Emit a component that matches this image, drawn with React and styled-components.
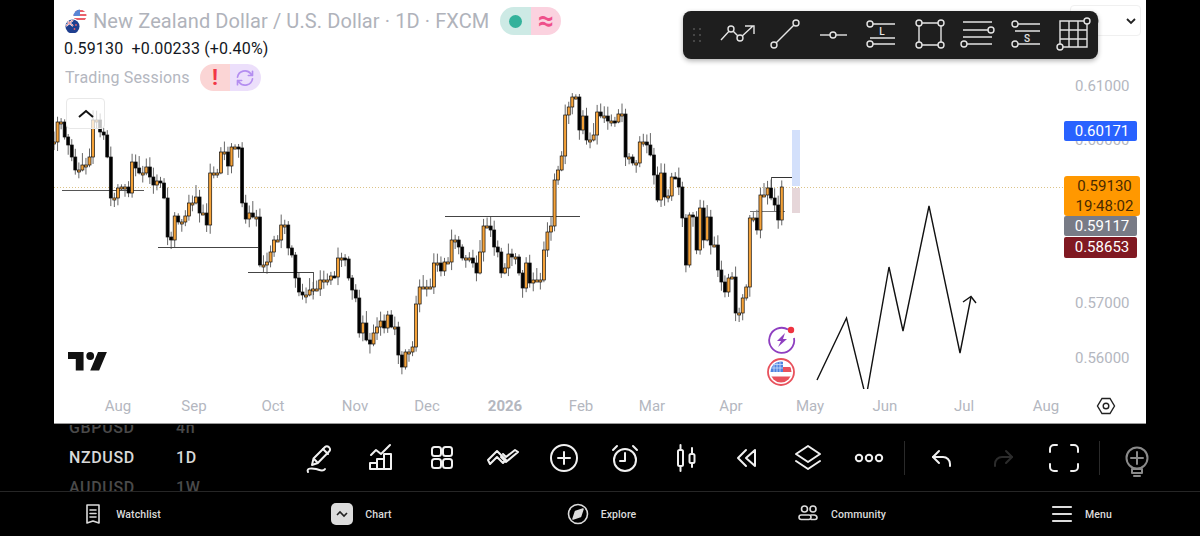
import React from 'react';
import styled, { createGlobalStyle } from 'styled-components';

const GlobalStyle = createGlobalStyle`
  html, body {
    margin: 0;
    padding: 0;
    background: #000;
    overflow: hidden;
    font-family: Roboto, "Liberation Sans", sans-serif;
  }
`;

// price path read off the picture, as [x, y] page pixels
const PATH = [
  [54,142],[60,122],[66,137],[69,145],[73,157],[75,170],[82,177],[84,165],[90,157],[92,139],[95,120],[100,132],[105,135],[107,157],[110,163],[113,198],[118,200],[120,188],[123,187],[130,193],[132,180],[134,162],[138,168],[141,173],[147,167],[149,155],[152,177],[155,185],[159,181],[163,183],[165,198],[168,237],[172,240],[174,216],[178,222],[187,216],[188,203],[197,197],[199,213],[207,225],[210,200],[212,173],[220,180],[223,152],[228,166],[233,147],[238,148],[242,203],[245,219],[250,213],[255,217],[259,243],[261,265],[266,262],[270,252],[274,240],[279,240],[283,225],[288,248],[292,255],[295,278],[298,292],[302,283],[305,295],[309,290],[313,289],[320,280],[324,280],[330,276],[335,277],[340,258],[345,259],[348,278],[352,290],[356,298],[359,333],[363,323],[367,340],[371,344],[373,333],[377,327],[380,321],[385,328],[388,315],[393,327],[398,355],[402,367],[406,352],[412,347],[416,304],[420,287],[425,287],[434,263],[442,271],[447,262],[452,240],[459,247],[463,258],[472,263],[478,273],[481,252],[485,226],[490,230],[495,247],[499,252],[503,273],[506,268],[509,254],[513,257],[520,273],[524,288],[527,263],[531,283],[535,280],[542,280],[545,250],[549,232],[553,226],[556,180],[560,170],[563,156],[567,115],[571,107],[574,97],[578,97],[579,130],[582,140],[585,116],[588,116],[589,140],[593,167],[596,135],[599,112],[603,116],[607,113],[610,121],[617,122],[620,114],[624,114],[625,160],[628,157],[635,163],[638,163],[642,142],[646,155],[649,145],[650,155],[653,175],[657,200],[660,173],[664,197],[668,196],[671,177],[675,178],[678,187],[682,218],[685,265],[689,215],[695,217],[697,250],[700,208],[705,240],[707,217],[710,230],[713,245],[717,270],[721,282],[725,292],[728,278],[732,277],[735,295],[738,313],[743,298],[747,287],[749,237],[752,218],[757,230],[760,252],[762,195],[768,188],[771,198],[775,205],[778,220],[782,187],
];

const STEP = 3.55;

function buildCandles() {
  const out = [];
  let open = PATH[0][1];
  let k = 0;
  let seed = 7;
  const rnd = () => {
    seed = (seed * 137 + 29) % 257;
    return seed / 257;
  };
  for (let x = 54; x <= 782.5; x += STEP) {
    while (k < PATH.length - 1 && PATH[k + 1][0] <= x + 2.5) k++;
    const close = PATH[k][1];
    const top = Math.min(open, close);
    const bottom = Math.max(open, close);
    out.push({
      x,
      open,
      close,
      high: top - 2 - rnd() * 10,
      low: bottom + 1 + rnd() * 9,
    });
    open = close;
  }
  return out;
}

const CANDLES = buildCandles();

const MONTHS = [
  { label: 'Aug', x: 118 },
  { label: 'Sep', x: 194 },
  { label: 'Oct', x: 273 },
  { label: 'Nov', x: 355 },
  { label: 'Dec', x: 427 },
  { label: '2026', x: 505, bold: true },
  { label: 'Feb', x: 581 },
  { label: 'Mar', x: 652 },
  { label: 'Apr', x: 731 },
  { label: 'May', x: 810 },
  { label: 'Jun', x: 885 },
  { label: 'Jul', x: 964 },
  { label: 'Aug', x: 1046 },
];

const SCALE = [
  { label: '0.61000', y: 86 },
  { label: '0.60000', y: 140 },
  { label: '0.57000', y: 303 },
  { label: '0.56000', y: 358 },
];

const LEVELS = [
  [62, 144, 190.5, '#555'],
  [158, 258, 247.5, '#444'],
  [248, 313, 272.5, '#444'],
  [445, 580, 216.5, '#444'],
  [750, 785, 211.5, '#777'],
  [771, 792, 177.5, '#333'],
];

const Page = styled.div`
  width: 1200px;
  height: 536px;
  background: #000;
  display: flex;
  flex-direction: column;
  overflow: hidden;
`;

const ChartPanel = styled.section`
  position: relative;
  width: 1092px;
  height: 423px;
  margin-left: 54px;
  background: #fff;
  border-bottom: 1px solid #999;
  display: flex;
  flex-direction: column;
  flex: none;
`;

const Plot = styled.svg`
  display: block;
  width: 1092px;
  height: 389px;
  flex: none;
`;

const TimeAxis = styled.div`
  position: relative;
  flex: 1;
`;

const TimeLabel = styled.span`
  position: absolute;
  top: 8px;
  transform: translateX(-50%);
  font-size: 15px;
  line-height: 18px;
  color: #b4b7bf;
  font-weight: ${(p) => (p.$bold ? 700 : 400)};
`;

const AxisGear = styled.svg`
  position: absolute;
  left: 1042px;
  top: 7px;
  width: 20px;
  height: 20px;
`;

const PriceLabel = styled.span`
  position: absolute;
  left: 1021px;
  transform: translateY(-50%);
  font-size: 15px;
  line-height: 18px;
  color: #b4b7bf;
`;

const PriceTag = styled.div`
  position: absolute;
  left: 1010px;
  width: ${(p) => p.$width || 73}px;
  background: ${(p) => p.$bg};
  color: ${(p) => p.$color || '#fff'};
  border-radius: 2px;
  font-size: 15px;
  line-height: 20px;
  text-align: center;
  padding-left: ${(p) => p.$inset || 3}px;
  box-sizing: border-box;
`;

const Legend = styled.div`
  position: absolute;
  left: 10px;
  top: 7px;
  display: flex;
  flex-direction: column;
  align-items: flex-start;
`;

const TitleRow = styled.div`
  display: flex;
  align-items: center;
  height: 28px;
`;

const Title = styled.span`
  font-size: 20px;
  letter-spacing: 0.1px;
  color: #b0b3bb;
  margin-left: 5px;
  white-space: nowrap;
`;

const Pill = styled.div`
  display: flex;
  width: 61px;
  height: ${(p) => p.$height}px;
  margin-left: ${(p) => p.$gap}px;
  border-radius: 14px;
  overflow: hidden;
`;

const PillHalf = styled.div`
  flex: 1;
  background: ${(p) => p.$bg};
  color: ${(p) => p.$color};
  display: flex;
  align-items: center;
  justify-content: center;
  font-size: ${(p) => p.$size || 20}px;
  line-height: 1;
  font-weight: 700;
`;

const Dot = styled.span`
  width: 13px;
  height: 13px;
  border-radius: 50%;
  background: #33b29b;
`;

const Quote = styled.div`
  font-size: 16px;
  line-height: 20px;
  margin-top: 4px;
  letter-spacing: 0.01em;
  color: #131722;
  white-space: pre;
`;

const SessionRow = styled.div`
  display: flex;
  align-items: center;
  margin-top: 5px;
  height: 27px;
`;

const Session = styled.span`
  font-size: 16px;
  letter-spacing: 0.01em;
  color: #b4b7bf;
  margin-left: 1px;
  white-space: nowrap;
`;

const Collapse = styled.button`
  margin: 7px 0 0 2px;
  width: 39px;
  height: 31px;
  padding: 0;
  border: 1px solid #e8e8e8;
  border-radius: 4px;
  background: rgba(255, 255, 255, 0.75);
  display: flex;
  align-items: center;
  justify-content: center;
`;

const Logo = styled.svg`
  position: absolute;
  left: 14px;
  top: 352px;
  width: 40px;
  height: 19px;
`;

const Badges = styled.div`
  position: absolute;
  left: 712px;
  top: 325px;
  display: flex;
  flex-direction: column;
  gap: 2px;
`;

const Scroller = styled.div`
  position: absolute;
  left: 1016px;
  top: 5px;
  width: 71px;
  height: 31px;
  box-sizing: border-box;
  border: 1px solid #f0f0f0;
  border-radius: 4px;
  display: flex;
  align-items: center;
  justify-content: space-between;
  padding: 0 3px 0 16px;
`;

const DrawBar = styled.div`
  position: absolute;
  left: 629px;
  top: 11px;
  width: 415px;
  height: 48px;
  background: #1e1e1e;
  border-radius: 8px;
  box-shadow: 0 2px 5px rgba(0, 0, 0, 0.3);
  display: flex;
  align-items: center;
  padding-left: 6px;
  box-sizing: border-box;
`;

const Grip = styled.svg`
  width: 16px;
  height: 20px;
  flex: none;
  margin-right: 12px;
`;

const DrawTool = styled.svg`
  width: 40px;
  height: 32px;
  flex: none;
  margin-right: 8px;
  overflow: visible;
  fill: none;
  stroke: #e4e4e4;
  stroke-width: 1.4;
`;

const ToolText = styled.text`
  font-family: Roboto, sans-serif;
  font-size: 10px;
  font-weight: 500;
  fill: #e4e4e4;
  stroke: none;
  text-anchor: middle;
`;

const ToolRow = styled.div`
  height: 67px;
  flex: none;
  display: flex;
  align-items: center;
  padding-left: 69px;
  overflow: hidden;
`;

const Picker = styled.div`
  width: 220px;
  flex: none;
  height: 67px;
  margin-top: 1px;
  display: flex;
  flex-direction: column;
  justify-content: center;
  gap: 12px;
  overflow: hidden;
`;

const PickerRow = styled.div`
  display: flex;
  font-size: 16px;
  line-height: 18px;
  font-weight: 500;
  letter-spacing: 0.04em;
  color: ${(p) => (p.$dim ? '#4a4a4a' : '#d8d8d8')};
`;

const PickerSymbol = styled.span`
  width: 107px;
`;

const ToolButton = styled.button`
  width: 61px;
  height: 40px;
  flex: none;
  padding: 0;
  border: 0;
  background: none;
  display: flex;
  align-items: center;
  justify-content: center;
  color: ${(p) => p.$color || '#f0f0f0'};
`;

const ToolIcon = styled.svg`
  width: 32px;
  height: 32px;
  overflow: visible;
  fill: none;
  stroke: currentColor;
  stroke-width: 2;
  stroke-linecap: round;
  stroke-linejoin: round;
`;

const Divider = styled.span`
  width: 1px;
  height: 34px;
  flex: none;
  background: #2a2a2a;
  margin: 0 6px 0 5px;
`;

const NavBar = styled.nav`
  flex: 1;
  border-top: 1px solid #262626;
  display: grid;
  grid-template-columns: repeat(5, 240px);
`;

const NavItem = styled.a`
  display: flex;
  align-items: center;
  justify-content: center;
  gap: 12px;
  padding-left: 3px;
  font-size: 10.5px;
  font-weight: 500;
  letter-spacing: 0.01em;
  color: #dcdcdc;
`;

const NavIcon = styled.svg`
  width: 22px;
  height: 22px;
  fill: none;
  stroke: #dcdcdc;
  stroke-width: 1.6;
  stroke-linecap: round;
  stroke-linejoin: round;
`;

const Node = ({ x, y }) => <circle cx={x} cy={y} r="3" fill="#1e1e1e" />;

const CandleChart = () => (
  <Plot viewBox="54 0 1092 389">
    <line x1="54" x2="1065" y1="187.5" y2="187.5" stroke="#dcc388" strokeDasharray="1 2" />
    {CANDLES.map((c) => (
      <line key={`w${c.x}`} x1={c.x} x2={c.x} y1={c.high} y2={c.low} stroke="#666" strokeWidth="1" />
    ))}
    {LEVELS.map(([a, b, y, col]) => (
      <line key={`${a}-${y}`} x1={a} x2={b} y1={y} y2={y} stroke={col} strokeWidth="1" />
    ))}
    <path d="M313.5 272v23M771.5 177v18" stroke="#555" fill="none" />
    {CANDLES.map((c) => {
      const up = c.close <= c.open;
      const top = Math.min(c.open, c.close);
      const h = Math.max(Math.abs(c.close - c.open), 2);
      return (
        <rect
          key={c.x}
          x={c.x - 1.5}
          y={top}
          width="3"
          height={h}
          fill={up ? '#f5a238' : '#000'}
          stroke="#111"
          strokeWidth="0.7"
        />
      );
    })}
    <rect x="792" y="130" width="8" height="56" fill="#d3e0fb" />
    <rect x="792" y="188" width="8" height="25" fill="#e6d6d9" />
    <polyline
      points="817,380 846.5,318 866,398 889,267 903,331 929,206 960,353 971,297"
      fill="none"
      stroke="#111"
      strokeWidth="1.4"
    />
    <polyline points="963,302 971,296.5 976,303" fill="none" stroke="#111" strokeWidth="1.4" />
  </Plot>
);

const PairFlag = () => (
  <svg width="24" height="24" viewBox="0 0 24 24" style={{ flex: 'none' }}>
    <defs>
      <clipPath id="usClip"><circle cx="16" cy="7" r="6.5" /></clipPath>
      <clipPath id="nzClip"><circle cx="8.5" cy="17.500" r="7" /></clipPath>
    </defs>
    <g clipPath="url(#usClip)">
      <rect x="9" y="0" width="14" height="14" fill="#fff" />
      <path d="M9 1h14v2H9zM9 5h14v2H9zM9 9h14v2H9z" fill="#e9606a" />
      <rect x="9" y="0" width="7" height="7" fill="#5a86d6" />
    </g>
    <circle cx="8.5" cy="17.500" r="8" fill="#fff" />
    <g clipPath="url(#nzClip)">
      <rect x="1" y="10" width="15" height="15" fill="#1f3f8f" />
      <path d="M2 11l7 6M2 17l7-6" stroke="#fff" strokeWidth="1.800" />
      <path d="M2 11l7 6M2 17l7-6" stroke="#d8343f" strokeWidth=".6" />
      <circle cx="12" cy="16" r=".9" fill="#e9606a" />
      <circle cx="10.500" cy="20" r=".9" fill="#e9606a" />
    </g>
  </svg>
);

const LegendBlock = () => (
  <Legend>
    <TitleRow>
      <PairFlag />
      <Title>New Zealand Dollar / U.S. Dollar · 1D · FXCM</Title>
      <Pill $height={28} $gap={11}>
        <PillHalf $bg="#cdeae5"><Dot /></PillHalf>
        <PillHalf $bg="#fbd2df" $color="#ef4f8a" $size={28}>≈</PillHalf>
      </Pill>
    </TitleRow>
    <Quote>0.59130  +0.00233 (+0.40%)</Quote>
    <SessionRow>
      <Session>Trading Sessions</Session>
      <Pill $height={27} $gap={10}>
        <PillHalf $bg="#fbd5d5" $color="#f23645" $size={22}>!</PillHalf>
        <PillHalf $bg="#ecdffb">
          <svg width="20" height="20" viewBox="0 0 24 24" fill="none" stroke="#b48ef0" strokeWidth="2" strokeLinecap="round" strokeLinejoin="round">
            <path d="M3 11a9 9 0 0 1 16-4l2 2M21 4v5h-5M21 13a9 9 0 0 1-16 4l-2-2M3 20v-5h5" />
          </svg>
        </PillHalf>
      </Pill>
    </SessionRow>
    <Collapse>
      <svg width="16" height="10" viewBox="0 0 16 10" fill="none" stroke="#111" strokeWidth="2">
        <path d="M1 8l7-6 7 6" />
      </svg>
    </Collapse>
  </Legend>
);

const DrawTools = () => (
  <DrawBar>
    <Grip viewBox="0 0 16 20" fill="#555">
      {[4, 10, 16].map((y) => (
        <g key={y}>
          <circle cx="5" cy={y} r="1" />
          <circle cx="11" cy={y} r="1" />
        </g>
      ))}
    </Grip>
    <DrawTool viewBox="0 0 40 32">
      <path d="M4 21l10-11 9 9L36 7M28 7h9v8" />
      <Node x={14} y={10} /><Node x={23} y={19} />
    </DrawTool>
    <DrawTool viewBox="0 0 40 32">
      <path d="M9 26L31 4" /><Node x={9} y={26} /><Node x={31} y={4} />
    </DrawTool>
    <DrawTool viewBox="0 0 40 32">
      <path d="M7 16h27" /><Node x={20} y={16} />
    </DrawTool>
    <DrawTool viewBox="0 0 40 32">
      <path d="M9 5h25M9 19h25M9 25h25" /><Node x={9} y={5} /><Node x={9} y={25} />
      <ToolText x="21" y="16">L</ToolText>
    </DrawTool>
    <DrawTool viewBox="0 0 40 32">
      <path d="M10 4h22v22H10z" />
      <Node x={10} y={4} /><Node x={32} y={4} /><Node x={10} y={26} /><Node x={32} y={26} />
    </DrawTool>
    <DrawTool viewBox="0 0 40 32">
      <path d="M6 3h29M6 11h28M6 18h29M7 25h28" /><Node x={34} y={11} /><Node x={7} y={25} />
    </DrawTool>
    <DrawTool viewBox="0 0 40 32">
      <path d="M10 5h25M10 12h25M10 25h25" /><Node x={10} y={5} /><Node x={10} y={25} />
      <ToolText x="22" y="23">S</ToolText>
    </DrawTool>
    <DrawTool viewBox="0 0 40 32">
      <path d="M7 2h27v26H7zM16 2v26M25 2v26M7 11h27M7 20h27" />
      <Node x={34} y={2} /><Node x={7} y={28} />
    </DrawTool>
  </DrawBar>
);

const tools = [
  <>
    <path d="M8 23l1.5-6.5L21 5a2.6 2.6 0 0 1 3.7 0l.6.6a2.6 2.6 0 0 1 0 3.7L13.8 21z" />
    <path d="M19 7l5 5M10 17l3 3" />
    <path d="M4 30c-2-4 4-4 8-3s7 3 9 0" />
  </>,
  <>
    <path d="M5 21h7v6H5zM12 17h7v10h-7zM19 12h7v15h-7z" />
    <path d="M6 13l5-5 5 4 9-9" />
  </>,
  <>
    <rect x="6" y="5" width="9" height="9" rx="2.5" />
    <rect x="17" y="5" width="9" height="9" rx="2.5" />
    <rect x="6" y="17" width="9" height="9" rx="2.5" />
    <rect x="17" y="17" width="9" height="9" rx="2.5" />
  </>,
  <>
    <path d="M2 23l7-7 6 6 3-3-9-9-9 9z" transform="translate(1 -1)" />
    <path d="M14 15l5 5L31 10l-3-2-9 7-3-3" />
  </>,
  <>
    <circle cx="16" cy="16" r="13" />
    <path d="M16 10v12M10 16h12" />
  </>,
  <>
    <circle cx="16" cy="18" r="11" />
    <path d="M16 11v8h-5M4 8l4-4M28 8l-4-4" />
  </>,
  <>
    <rect x="8" y="8" width="5" height="16" rx="1.5" />
    <path d="M10.500 3v5M10.500 24v5M22 6v6M22 21v4" />
    <rect x="19.500" y="12" width="5" height="9" rx="1.5" />
  </>,
  <>
    <path d="M15 8l-8 8 8 8M24 8l-9 8 9 8zM24 8v16" />
  </>,
  <>
    <path d="M16 4L4 12l12 8 12-8z" />
    <path d="M4 19l12 8 12-8" />
  </>,
  <>
    <circle cx="6" cy="16" r="3.2" />
    <circle cx="16" cy="16" r="3.2" />
    <circle cx="26" cy="16" r="3.2" />
  </>,
];

const Toolbar = () => (
  <ToolRow>
    <Picker>
      <PickerRow $dim><PickerSymbol>GBPUSD</PickerSymbol><span>4h</span></PickerRow>
      <PickerRow><PickerSymbol>NZDUSD</PickerSymbol><span>1D</span></PickerRow>
      <PickerRow $dim><PickerSymbol>AUDUSD</PickerSymbol><span>1W</span></PickerRow>
    </Picker>
    {tools.map((t, i) => (
      <ToolButton key={i}><ToolIcon viewBox="0 0 32 32">{t}</ToolIcon></ToolButton>
    ))}
    <Divider />
    <ToolButton>
      <ToolIcon viewBox="0 0 32 32"><path d="M13 9l-6 6 6 6" /><path d="M7 15h10a7 7 0 0 1 7 7v2" /></ToolIcon>
    </ToolButton>
    <ToolButton $color="#2c2c2c">
      <ToolIcon viewBox="0 0 32 32"><path d="M19 9l6 6-6 6" /><path d="M25 15H15a7 7 0 0 0-7 7v2" /></ToolIcon>
    </ToolButton>
    <ToolButton>
      <ToolIcon viewBox="0 0 32 32"><path d="M9 3H6a4 4 0 0 0-4 4v3M23 3h3a4 4 0 0 1 4 4v3M9 29H6a4 4 0 0 1-4-4v-3M23 29h3a4 4 0 0 0 4-4v-3" /></ToolIcon>
    </ToolButton>
    <Divider />
    <ToolButton $color="#8a8a8a">
      <ToolIcon viewBox="0 0 32 32">
        <circle cx="16" cy="16" r="10.500" />
        <path d="M16 10v12M10 16h12M11 27h10v4H11zM13 34h6" />
      </ToolIcon>
    </ToolButton>
  </ToolRow>
);

const Nav = () => (
  <NavBar>
    <NavItem>
      <NavIcon viewBox="0 0 22 22"><path d="M5 2h12v18l-6-2-6 2zM8 7h6M8 10.500h6M8 14h6" /></NavIcon>
      Watchlist
    </NavItem>
    <NavItem>
      <svg width="22" height="22" viewBox="0 0 22 22" fill="none">
        <rect width="22" height="22" rx="5" fill="#dcdcdc" />
        <path d="M6 12l3-3 4 4 3-3" stroke="#222" strokeWidth="1.6" />
      </svg>
      Chart
    </NavItem>
    <NavItem>
      <NavIcon viewBox="0 0 22 22"><circle cx="11" cy="11" r="9.500" /><path d="M16 6l-2.500 7.500L6 16l2.500-7.500z" fill="#dcdcdc" /></NavIcon>
      Explore
    </NavItem>
    <NavItem>
      <NavIcon viewBox="0 0 22 22">
        <circle cx="7.500" cy="6" r="3" /><circle cx="16" cy="6" r="3" />
        <rect x="2" y="12" width="12" height="4.500" rx="2.200" />
        <path d="M14 12h3a3 3 0 0 1 3 2.200 2.200 2.200 0 0 1-2 2.300h-4" />
      </NavIcon>
      Community
    </NavItem>
    <NavItem>
      <NavIcon viewBox="0 0 22 22" style={{ strokeWidth: 2.2 }}><path d="M2 4h18M2 11h18M2 18h18" /></NavIcon>
      Menu
    </NavItem>
  </NavBar>
);

export default function App() {
  return (
    <Page>
      <GlobalStyle />
      <ChartPanel>
        <CandleChart />
        <TimeAxis>
          {MONTHS.map((m) => (
            <TimeLabel key={m.x} $bold={m.bold} style={{ left: m.x - 54 }}>{m.label}</TimeLabel>
          ))}
          <AxisGear viewBox="0 0 20 20" fill="none" stroke="#222" strokeWidth="1.4">
            <path d="M6 2.500h8L18.500 10 14 17.500H6L1.500 10z" />
            <circle cx="10" cy="10" r="2.800" />
          </AxisGear>
        </TimeAxis>

        {SCALE.map((s) => (
          <PriceLabel key={s.y} style={{ top: s.y }}>{s.label}</PriceLabel>
        ))}
        <PriceTag $bg="#2962ff" style={{ top: 121 }}>0.60171</PriceTag>
        <PriceTag $bg="#ff9800" $color="#4a2a00" $width={76} $inset={5} style={{ top: 176, borderRadius: 3 }}>
          0.59130<br />19:48:02
        </PriceTag>
        <PriceTag $bg="#787b86" style={{ top: 216 }}>0.59117</PriceTag>
        <PriceTag $bg="#801922" style={{ top: 237, lineHeight: '21px' }}>0.58653</PriceTag>

        <LegendBlock />

        <Logo viewBox="0 4 36 16.500" fill="#111" preserveAspectRatio="none">
          <path d="M14 20H7V10H0V4h14zM28 20h-8l7-16h8z" />
          <circle cx="20" cy="7.500" r="3.500" />
        </Logo>

        <Badges>
          <svg width="30" height="30" viewBox="0 0 30 30" fill="none" style={{ marginLeft: 1 }}>
            <path d="M21 4.500A12.500 12.500 0 1 0 27 13" stroke="#8e3fc0" strokeWidth="1.8" />
            <path d="M18 8l-8 8h4l-3 6 9-8h-4z" fill="#8e3fc0" />
            <circle cx="24" cy="5" r="3.200" fill="#ef3340" />
          </svg>
          <svg width="30" height="30" viewBox="0 0 30 30">
            <defs>
              <clipPath id="usBadge"><circle cx="15" cy="15" r="10.500" /></clipPath>
            </defs>
            <circle cx="15" cy="15" r="13" fill="#fff" stroke="#e8515c" strokeWidth="1.800" />
            <g clipPath="url(#usBadge)">
              <path d="M16 10h10v5H16zM3 19.500h24V27H3z" fill="#e8515c" />
              <rect x="3" y="3" width="14" height="12" fill="#4f84e0" />
              <path d="M5 7.500h12M5 11h12M8 4v11M11 4v11M14 4v11" stroke="#cfe0fb" strokeWidth=".8" />
            </g>
          </svg>
        </Badges>

        <Scroller>
          <svg width="12" height="12" viewBox="0 0 12 12" fill="none" stroke="#666" strokeWidth="1.200">
            <circle cx="6" cy="6" r="5" />
          </svg>
          <svg width="12" height="8" viewBox="0 0 12 8" fill="none" stroke="#222" strokeWidth="1.800">
            <path d="M2 2l4 4 4-4" />
          </svg>
        </Scroller>
        <DrawTools />
      </ChartPanel>
      <Toolbar />
      <Nav />
    </Page>
  );
}
